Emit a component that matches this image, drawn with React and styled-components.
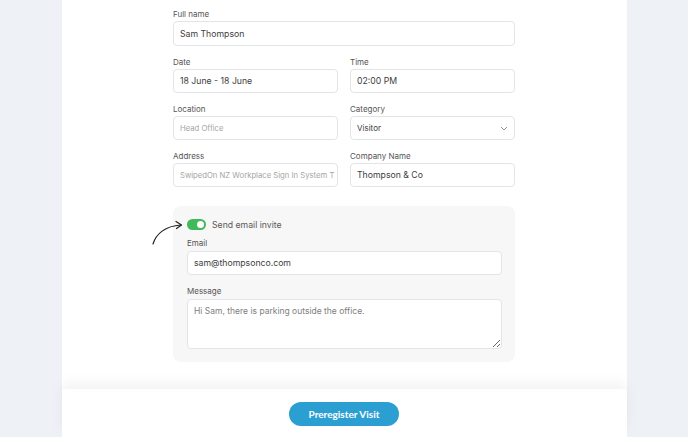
import React from 'react';
import styled, { createGlobalStyle } from 'styled-components';

const GlobalStyle = createGlobalStyle`
  html, body {
    margin: 0;
    padding: 0;
    height: 100%;
    overflow: hidden;
    background: #eef1f6;
    font-family: Inter, "Liberation Sans", sans-serif;
  }
`;

const Page = styled.div`
  width: 565px;
  height: 437px;
  margin: 0 auto;
  display: flex;
  flex-direction: column;
  background: #fff;
`;

const Body = styled.div`
  flex: 1;
  padding-top: 9px;
  display: flex;
  justify-content: center;
`;

const Form = styled.div`
  width: 342px;
  display: flex;
  flex-direction: column;
  gap: 11px;
`;

const Row = styled.div`
  display: grid;
  grid-template-columns: minmax(0, 1fr) minmax(0, 1fr);
  gap: 12px;
`;

const Field = styled.div`
  min-width: 0;
  display: flex;
  flex-direction: column;
  gap: ${p => p.$gap || 2}px;
`;

const Label = styled.div`
  font-size: 8px;
  line-height: 10px;
  color: #555;
`;

const Input = styled.div`
  box-sizing: border-box;
  height: ${p => p.$h || 24}px;
  border: 1px solid #e2e4e8;
  border-radius: 4px;
  background: #fff;
  display: flex;
  align-items: center;
  justify-content: space-between;
  padding: 0 6px 0 6px;
  font-size: ${p => (p.$muted ? 7.7 : 8.7)}px;
  color: ${p => (p.$muted ? '#a5a5a5' : '#404040')};
  white-space: nowrap;
  overflow: hidden;
`;

const Panel = styled.div`
  margin-top: 8px;
  background: #f7f7f7;
  border-radius: 8px;
  padding: 13px 13px 13px 14px;
  display: flex;
  flex-direction: column;
  position: relative;
`;

const ToggleRow = styled.div`
  display: flex;
  align-items: center;
  gap: 6px;
  font-size: 8.7px;
  color: #5a5a5a;
  margin-bottom: 8px;
`;

const Toggle = styled.div`
  width: 19px;
  height: 11px;
  border-radius: 6px;
  background: #3fb95a;
  position: relative;
  &::after {
    content: '';
    position: absolute;
    right: 2px;
    top: 2px;
    width: 7px;
    height: 7px;
    border-radius: 50%;
    background: #fff;
  }
`;

const Arrow = styled.svg`
  position: absolute;
  left: -22px;
  top: 14px;
`;

const TextArea = styled.textarea`
  box-sizing: border-box;
  height: 50px;
  border: 1px solid #e2e4e8;
  border-radius: 4px;
  background: #fff;
  padding: 6px 6px;
  font-family: inherit;
  font-size: 8.5px;
  color: #777;
  outline: none;
  &::placeholder {
    color: #808080;
  }
`;

const Footer = styled.div`
  box-sizing: border-box;
  height: 48px;
  flex-shrink: 0;
  background: #fff;
  border-radius: 4px 4px 0 0;
  box-shadow: 0 -6px 14px rgba(0, 0, 0, 0.05);
  display: flex;
  justify-content: center;
  padding-top: 13px;
`;

const Button = styled.button`
  width: 110px;
  height: 24px;
  border: none;
  border-radius: 12px;
  background: #2b9fd1;
  color: #fff;
  font-family: Lato, "Open Sans", sans-serif;
  font-weight: 700;
  font-size: 10px;
  padding: 0;
`;

const Chevron = () => (
  <svg width="8" height="5" viewBox="0 0 8 5">
    <path d="M1 1l3 3 3-3" fill="none" stroke="#888" strokeWidth="0.9" />
  </svg>
);

export default function App() {
  return (
    <>
      <GlobalStyle />
      <Page>
        <Body>
          <Form>
            <Field>
              <Label>Full name</Label>
              <Input $h={25}>Sam Thompson</Input>
            </Field>
            <Row>
              <Field>
                <Label>Date</Label>
                <Input>18 June - 18 June</Input>
              </Field>
              <Field>
                <Label>Time</Label>
                <Input>02:00 PM</Input>
              </Field>
            </Row>
            <Row>
              <Field>
                <Label>Location</Label>
                <Input $muted>Head Office</Input>
              </Field>
              <Field>
                <Label>Category</Label>
                <Input style={{ fontSize: 8 }}>
                  Visitor
                  <Chevron />
                </Input>
              </Field>
            </Row>
            <Row>
              <Field>
                <Label>Address</Label>
                <Input $muted>SwipedOn NZ Workplace Sign In System T</Input>
              </Field>
              <Field>
                <Label>Company Name</Label>
                <Input>Thompson &amp; Co</Input>
              </Field>
            </Row>
            <Panel>
              <Arrow width="34" height="26" viewBox="0 0 34 26">
                <path
                  d="M2 24 C5 14 14 6 30 5"
                  fill="none"
                  stroke="#222"
                  strokeWidth="1.2"
                  strokeLinecap="round"
                />
                <path
                  d="M25 1.5 L30.5 5 L25.5 8.5"
                  fill="none"
                  stroke="#222"
                  strokeWidth="1.2"
                  strokeLinecap="round"
                  strokeLinejoin="round"
                />
              </Arrow>
              <ToggleRow>
                <Toggle />
                Send email invite
              </ToggleRow>
              <Field $gap={3}>
                <Label>Email</Label>
                <Input>sam@thompsonco.com</Input>
              </Field>
              <Field $gap={3} style={{ marginTop: 11 }}>
                <Label>Message</Label>
                <TextArea readOnly placeholder="Hi Sam, there is parking outside the office." />
              </Field>
            </Panel>
          </Form>
        </Body>
        <Footer>
          <Button>Preregister Visit</Button>
        </Footer>
      </Page>
    </>
  );
}
